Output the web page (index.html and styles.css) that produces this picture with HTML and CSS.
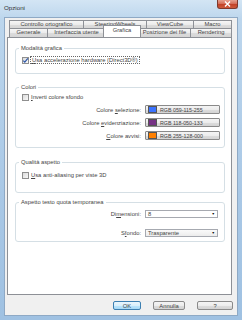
FILE: index.html
```html
<!DOCTYPE html>
<html lang="it">
<head>
    <meta charset="UTF-8">
    <title>Opzioni</title>
    <link rel="stylesheet" href="styles.css">
</head>
<body>
    <div class="window">
        <div class="titlebar">
            <span class="title">Opzioni</span>
            <span class="close">
                <svg width="7" height="6" viewBox="0 0 7 6"><path d="M1 0.5 L6 5.5 M6 0.5 L1 5.5" stroke="#fff" stroke-width="1.4"/></svg>
            </span>
        </div>

        <div class="client">
            <div class="tabs">
                <div class="tab-row back">
                    <div class="tab t-orto">Controllo ortografico</div>
                    <div class="tab t-steer">SteeringWheels</div>
                    <div class="tab t-cube">ViewCube</div>
                    <div class="tab t-macro">Macro</div>
                </div>
                <div class="tab-row front">
                    <div class="tab t-gen">Generale</div>
                    <div class="tab t-ui">Interfaccia utente</div>
                    <div class="tab t-graf active">Grafica</div>
                    <div class="tab t-pos">Posizione dei file</div>
                    <div class="tab t-rend">Rendering</div>
                </div>
            </div>

            <div class="panel">
                <fieldset class="group g-mode">
                    <legend>Modalità grafica</legend>
                    <div class="check">
                        <span class="box on">
                            <svg width="7" height="7" viewBox="0 0 7 7"><path d="M1.3 3.6 L2.8 5.2 L5.8 1.4" fill="none" stroke="#2b55a8" stroke-width="1.2"/></svg>
                        </span>
                        <span class="focus"><u>U</u>sa accelerazione hardware (Direct3D®)</span>
                    </div>
                </fieldset>

                <fieldset class="group g-colors">
                    <legend>Colori</legend>
                    <div class="check">
                        <span class="box"></span>
                        <span><u>I</u>nverti colore sfondo</span>
                    </div>
                    <div class="field">
                        <span class="label">Colore <u>s</u>elezione:</span>
                        <span class="color-btn"><span class="swatch sw-blue"></span>RGB 059-115-255</span>
                    </div>
                    <div class="field">
                        <span class="label">Colore <u>e</u>videnziazione:</span>
                        <span class="color-btn"><span class="swatch sw-purple"></span>RGB 118-050-133</span>
                    </div>
                    <div class="field">
                        <span class="label"><u>C</u>olore avvisi:</span>
                        <span class="color-btn"><span class="swatch sw-orange"></span>RGB 255-128-000</span>
                    </div>
                </fieldset>

                <fieldset class="group g-quality">
                    <legend>Qualità aspetto</legend>
                    <div class="check">
                        <span class="box"></span>
                        <span><u>U</u>sa anti-aliasing per viste 3D</span>
                    </div>
                </fieldset>

                <fieldset class="group g-text">
                    <legend>Aspetto testo quota temporanea</legend>
                    <div class="field">
                        <span class="label">Di<u>m</u>ensioni:</span>
                        <span class="combo">8<span class="arrow">▼</span></span>
                    </div>
                    <div class="field">
                        <span class="label">S<u>f</u>ondo:</span>
                        <span class="combo list">Trasparente<span class="arrow">▼</span></span>
                    </div>
                </fieldset>
            </div>

            <div class="buttons">
                <span class="btn b-ok default">OK</span>
                <span class="btn b-cancel">Annulla</span>
                <span class="btn b-help">?</span>
            </div>
        </div>
    </div>
</body>
</html>
```

FILE: styles.css
```css
body {
    margin: 0;
    width: 242px;
    height: 320px;
    overflow: hidden;
    font-family: 'Liberation Sans', Arial, sans-serif;
    font-size: 5.8px;
    color: #444;
}
u {
    text-decoration-thickness: 0.5px;
}
.window {
    width: 242px;
    height: 320px;
    display: flex;
    flex-direction: column;
    background: linear-gradient(180deg, #d3e5f4 0%, #bcd6ed 6%, #a9c8e6 60%, #9fc1e2 100%);
}
.titlebar {
    height: 17px;
    display: flex;
    justify-content: space-between;
    align-items: flex-start;
    padding-left: 4px;
}
.title {
    margin-top: 4px;
    font-size: 6.2px;
    color: #333;
}
.close {
    width: 19px;
    height: 8px;
    margin: 0 4px 0 0;
    display: flex;
    align-items: center;
    justify-content: center;
    background: linear-gradient(180deg, #e6a190 0%, #d5705a 45%, #c24328 55%, #cf5a3c 100%);
    border: 1px solid #7d3a2e;
    border-top: none;
    border-radius: 0 0 3px 3px;
}
.client {
    flex: 1;
    margin: 0 4px 4px;
    background: #f0f0f0;
    border: 1px solid #8ea9c5;
    display: flex;
    flex-direction: column;
}
.tabs {
    margin: 2px 0 0 4px;
}
.tab-row {
    display: flex;
}
.tab-row.back {
    height: 8px;
}
.tab-row.front {
    height: 9px;
}
.tab {
    box-sizing: border-box;
    border: 1px solid #8d9096;
    border-bottom: none;
    margin-right: -1px;
    background: linear-gradient(180deg, #f6f6f6 0%, #ebebeb 50%, #dcdcdc 51%, #d6d6d6 100%);
    display: flex;
    align-items: center;
    justify-content: center;
    white-space: nowrap;
    line-height: 1;
}
.t-orto { width: 75px; }
.t-steer { width: 64px; }
.t-cube { width: 48px; }
.t-macro { width: 39px; }
.t-gen { width: 39px; }
.t-ui { width: 59px; }
.t-graf { width: 34px; }
.t-pos { width: 53px; }
.t-rend { width: 42px; }
.tab.active {
    background: #fff;
    height: 12px;
    margin: -3px -3px -1px -2px;
    width: 38px;
    position: relative;
    z-index: 1;
    padding-bottom: 1px;
}
.panel {
    flex: 1;
    margin: 0 5px 0 2px;
    background: #fff;
    border: 1px solid #8d9096;
    padding-top: 7px;
}
.group {
    box-sizing: border-box;
    margin: 0 6px 0 7px;
    padding: 0 4px 0 6px;
    border: 1px solid #d5dfe5;
    border-radius: 3px;
    display: flex;
    flex-direction: column;
}
.group legend {
    padding: 0 2px;
    margin-left: -3px;
    line-height: 7px;
}
.g-mode {
    height: 29px;
    padding-top: 4px;
}
.g-colors {
    margin-top: 10px;
    height: 64px;
    padding-top: 2px;
}
.g-quality {
    margin-top: 11px;
    height: 34px;
    padding-top: 5px;
}
.g-text {
    margin-top: 6px;
    height: 43px;
    padding-top: 4px;
}
.check {
    display: flex;
    align-items: center;
    gap: 2px;
    height: 8px;
}
.box {
    box-sizing: border-box;
    width: 7px;
    height: 7px;
    border: 1px solid #8f8f8f;
    background: linear-gradient(135deg, #dcdcdc, #f8f8f8);
    display: flex;
    align-items: center;
    justify-content: center;
}
.box svg {
    flex: none;
}
.focus {
    outline: 1px dotted #666;
    outline-offset: 0;
    padding: 0 1px;
}
.field {
    display: flex;
    align-items: center;
    justify-content: flex-end;
    gap: 4px;
    margin-top: 4px;
}
.g-text .field:first-of-type {
    margin-top: 0;
}
.g-text .field + .field {
    margin-top: 11px;
}
.color-btn {
    box-sizing: border-box;
    width: 75px;
    height: 9px;
    border: 1px solid #8a8a8a;
    border-radius: 1px;
    background: linear-gradient(180deg, #f4f4f4 0%, #ececec 50%, #dddddd 51%, #d3d3d3 100%);
    display: flex;
    align-items: center;
    gap: 3px;
    padding-left: 2px;
    font-size: 5.3px;
}
.swatch {
    width: 7px;
    height: 5px;
    border: 0.5px solid #555;
}
.sw-blue { background: #3b73ff; }
.sw-purple { background: #763285; }
.sw-orange { background: #ff8000; }
.combo {
    box-sizing: border-box;
    width: 73px;
    height: 8px;
    border: 1px solid #a6a9b0;
    background: #fff;
    display: flex;
    align-items: center;
    justify-content: space-between;
    padding: 0 2px;
    margin-right: 2px;
}
.combo.list {
    background: linear-gradient(180deg, #fafafa, #ececec);
}
.arrow {
    font-size: 3.5px;
    color: #111;
}
.buttons {
    height: 9px;
    padding: 6px 4px 5px;
    display: flex;
    justify-content: flex-end;
    gap: 12px;
}
.btn {
    box-sizing: border-box;
    height: 9px;
    border: 1px solid #8a8a8a;
    border-radius: 2px;
    background: linear-gradient(180deg, #f4f4f4 0%, #ececec 50%, #dddddd 51%, #d3d3d3 100%);
    display: flex;
    align-items: center;
    justify-content: center;
}
.btn.default {
    border-color: #3c7fb1;
    background: linear-gradient(180deg, #eaf6fd 0%, #d9f0fc 50%, #bee6fd 51%, #a7d9f5 100%);
}
.b-ok { width: 28px; }
.b-cancel { width: 32px; }
.b-help { width: 36px; }
```
